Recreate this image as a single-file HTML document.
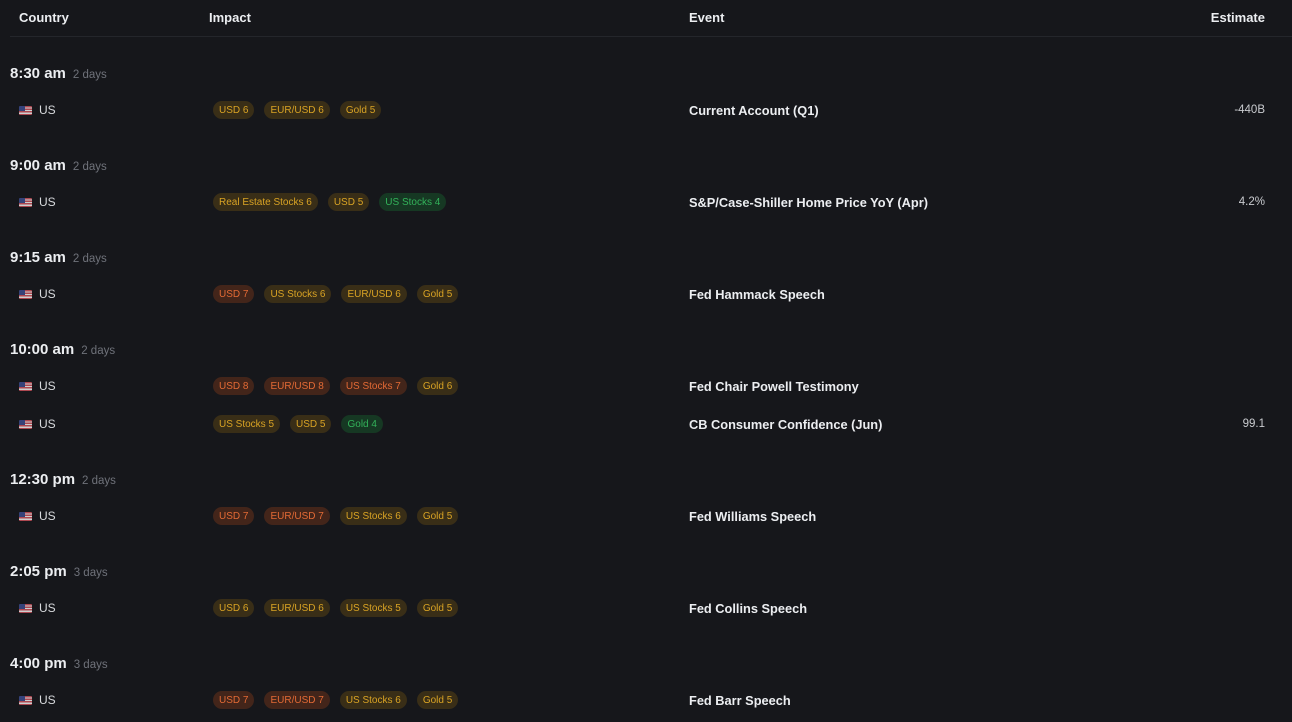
<!DOCTYPE html>
<html><head><meta charset="utf-8"><style>
html,body{margin:0;padding:0;}
body{width:1292px;height:722px;background:#16171b;font-family:"Liberation Sans",Arial,sans-serif;color:#e6e7ea;position:relative;overflow:hidden;}
.a{position:absolute;white-space:nowrap;}
.h{top:10px;font-size:13px;font-weight:bold;color:#eceef1;}
.line{position:absolute;left:10px;right:0;top:36px;height:1px;background:#24262b;}
.t{left:10px;font-size:15px;font-weight:bold;color:#eceef1;}
.t span{font-size:11.5px;font-weight:normal;color:#6f727a;margin-left:7px;}
.c{left:19px;font-size:12px;color:#d8dadd;display:flex;align-items:center;}
.flag{width:13px;height:9px;margin-right:7px;background:linear-gradient(#3b4a8a,#3b4a8a) 0 0/6px 5px no-repeat,repeating-linear-gradient(#c8505a 0 1.3px,#eee 1.3px 2.6px);border-radius:1px;opacity:.85}
.b{left:213px;display:flex;gap:10px;}
.p{height:18px;display:inline-flex;align-items:center;padding:0 6px;border-radius:9px;font-size:10px;box-sizing:border-box;}
.y{background:#392e17;color:#d9a324;}
.o{background:#43251a;color:#e36a35;}
.g{background:#163823;color:#33b25a;}
.e{left:689px;font-size:12.8px;font-weight:bold;color:#eceef1;}
.s{right:27px;font-size:11.5px;color:#c9cbcf;}
</style></head><body>
<div class="a h" style="left:19px">Country</div>
<div class="a h" style="left:209px">Impact</div>
<div class="a h" style="left:689px">Event</div>
<div class="a h" style="right:27px">Estimate</div>
<div class="line"></div>

<div class="a t" style="top:65px">8:30 am<span>2 days</span></div>
<div class="a c" style="top:103px"><i class="flag"></i>US</div>
<div class="a b" style="top:101px"><span class="p y">USD 6</span><span class="p y">EUR/USD 6</span><span class="p y">Gold 5</span></div>
<div class="a e" style="top:103px">Current Account (Q1)</div>
<div class="a s" style="top:104px">-440B</div>

<div class="a t" style="top:157px">9:00 am<span>2 days</span></div>
<div class="a c" style="top:195px"><i class="flag"></i>US</div>
<div class="a b" style="top:193px"><span class="p y">Real Estate Stocks 6</span><span class="p y">USD 5</span><span class="p g">US Stocks 4</span></div>
<div class="a e" style="top:195px">S&amp;P/Case-Shiller Home Price YoY (Apr)</div>
<div class="a s" style="top:196px">4.2%</div>

<div class="a t" style="top:249px">9:15 am<span>2 days</span></div>
<div class="a c" style="top:287px"><i class="flag"></i>US</div>
<div class="a b" style="top:285px"><span class="p o">USD 7</span><span class="p y">US Stocks 6</span><span class="p y">EUR/USD 6</span><span class="p y">Gold 5</span></div>
<div class="a e" style="top:287px">Fed Hammack Speech</div>

<div class="a t" style="top:341px">10:00 am<span>2 days</span></div>
<div class="a c" style="top:379px"><i class="flag"></i>US</div>
<div class="a b" style="top:377px"><span class="p o">USD 8</span><span class="p o">EUR/USD 8</span><span class="p o">US Stocks 7</span><span class="p y">Gold 6</span></div>
<div class="a e" style="top:379px">Fed Chair Powell Testimony</div>
<div class="a c" style="top:417px"><i class="flag"></i>US</div>
<div class="a b" style="top:415px"><span class="p y">US Stocks 5</span><span class="p y">USD 5</span><span class="p g">Gold 4</span></div>
<div class="a e" style="top:417px">CB Consumer Confidence (Jun)</div>
<div class="a s" style="top:418px">99.1</div>

<div class="a t" style="top:471px">12:30 pm<span>2 days</span></div>
<div class="a c" style="top:509px"><i class="flag"></i>US</div>
<div class="a b" style="top:507px"><span class="p o">USD 7</span><span class="p o">EUR/USD 7</span><span class="p y">US Stocks 6</span><span class="p y">Gold 5</span></div>
<div class="a e" style="top:509px">Fed Williams Speech</div>

<div class="a t" style="top:563px">2:05 pm<span>3 days</span></div>
<div class="a c" style="top:601px"><i class="flag"></i>US</div>
<div class="a b" style="top:599px"><span class="p y">USD 6</span><span class="p y">EUR/USD 6</span><span class="p y">US Stocks 5</span><span class="p y">Gold 5</span></div>
<div class="a e" style="top:601px">Fed Collins Speech</div>

<div class="a t" style="top:655px">4:00 pm<span>3 days</span></div>
<div class="a c" style="top:693px"><i class="flag"></i>US</div>
<div class="a b" style="top:691px"><span class="p o">USD 7</span><span class="p o">EUR/USD 7</span><span class="p y">US Stocks 6</span><span class="p y">Gold 5</span></div>
<div class="a e" style="top:693px">Fed Barr Speech</div>
</body></html>
